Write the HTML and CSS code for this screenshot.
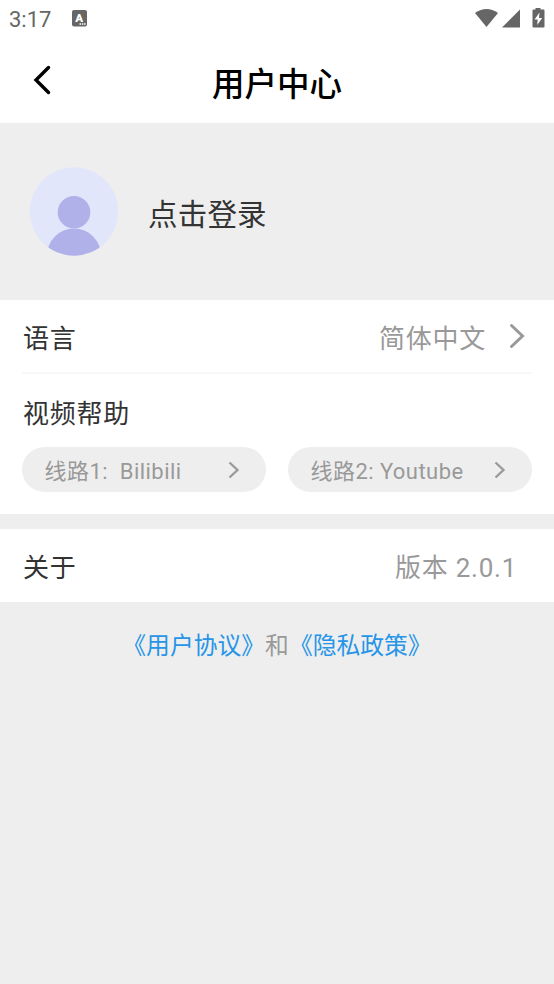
FILE: index.html
```html
<!DOCTYPE html>
<html lang="zh-CN">
<head>
<meta charset="UTF-8">
<title>用户中心</title>
<link rel="stylesheet" href="styles.css">
</head>
<body>
<div class="status">
  <span class="time">3:17</span>
  <svg class="input-icon" width="15" height="17" viewBox="0 0 15 17"><rect width="15" height="16.5" rx="2" fill="#666"/><text class="input-letter" x="7.200" y="12" text-anchor="middle">A</text><path d="M7.500 14H14" stroke="#fff" stroke-width="1.4" stroke-dasharray="1.5 .8"/></svg>
  <svg class="signals" width="72" height="22" viewBox="0 0 72 22"><g fill="#666"><path d="M1 5Q12.500-3 24 5L12.500 19Z"/><path d="M46 1.500V19.500H28Z"/><path d="M61.500 0h5v1.500h3q1 0 1 1v16q0 1-1 1H59.500q-1 0-1-1v-16q0-1 1-1h2z"/></g><path d="M65.500 4.500 60.500 11.500h3.200l-.5 5.500 5-7h-3.200z" fill="#fff"/></svg>
</div>
<header class="header">
  <svg class="back" width="18" height="30" viewBox="0 0 18 30"><path d="M15.500 2.500 3 15 15.500 27.500" fill="none" stroke="#000" stroke-width="3.400" stroke-linecap="round"/></svg>
  <h1>用户中心</h1>
</header>
<section class="profile">
  <svg width="88" height="89" viewBox="0 0 88 89"><defs><clipPath id="disc"><circle cx="44" cy="44.500" r="44.200"/></clipPath></defs><g clip-path="url(#disc)"><rect width="88" height="89" fill="#e2e6fa"/><circle cx="44" cy="45.300" r="16.300" fill="#b0b1e9"/><circle cx="44" cy="88.500" r="27" fill="#b0b1e9"/></g></svg>
  <span class="login">点击登录</span>
</section>
<main>
  <section class="card settings">
    <div class="row language">
      <span>语言</span>
      <span class="value">简体中文</span>
      <svg class="chevron" width="16" height="26" viewBox="0 0 16 26"><path d="M2.500 2.500 13.500 13 2.500 23.500" fill="none" stroke="#999" stroke-width="3" stroke-linecap="round"/></svg>
    </div>
    <div class="help-title">视频帮助</div>
    <div class="routes">
      <div class="pill"><span>线路1:&nbsp; Bilibili</span><svg width="12" height="18" viewBox="0 0 12 18"><path d="M1.500 1.500 9.500 9 1.500 16.500" fill="none" stroke="#999" stroke-width="2.300"/></svg></div>
      <div class="pill"><span>线路2: Youtube</span><svg width="12" height="18" viewBox="0 0 12 18"><path d="M1.500 1.500 9.500 9 1.500 16.500" fill="none" stroke="#999" stroke-width="2.300"/></svg></div>
    </div>
  </section>
  <section class="card row about"><span>关于</span><span class="value">版本 2.0.1</span></section>
</main>
<footer><span class="link">《用户协议》</span><span>和</span><span class="link">《隐私政策》</span></footer>
</body>
</html>
```
FILE: styles.css
```css
* { box-sizing: border-box; }
body {
  margin: 0;
  min-height: 984px;
  background: #eee;
  color: #333;
  font-family: Roboto, "Noto Sans CJK SC", sans-serif;
  overflow: hidden;
}
svg { display: block; flex: none; }
.status {
  display: flex;
  height: 38px;
  padding: 0 8px 0 9px;
  align-items: center;
  background: #fff;
  color: #666;
}
.time { width: 63px; padding-top: 2px; font-size: 22px; line-height: 38px; }
.input-icon { margin-bottom: 1px; }
.input-letter { fill: #fff; font-size: 11.5px; font-weight: 900; }
.signals { margin-left: auto; }
.header {
  display: grid;
  grid-template-columns: 80px 1fr 80px;
  height: 85px;
  align-items: center;
  background: #fff;
}
.back { margin: 0 0 2px 33px; }
h1 {
  margin: 8px 0 0;
  color: #000;
  font-size: 32.5px;
  line-height: 48px;
  font-weight: 500;
  text-align: center;
}
.profile {
  display: flex;
  height: 177px;
  align-items: center;
  gap: 30px;
  padding: 0 30px;
}
.login { padding-top: 6px; font-size: 29.5px; line-height: 44px; letter-spacing: .2px; }
.card { background: #fff; font-size: 26px; letter-spacing: .75px; }
.settings { height: 214px; padding: 0 22px; }
.row { display: flex; align-items: center; }
.language { height: 74px; padding-left: 1px; border-bottom: 2px solid #f7f7f7; }
.value { margin-left: auto; color: #999; }
.chevron { margin: 0 7px 0 23px; }
.help-title { height: 73px; padding-left: 1px; line-height: 80px; }
.routes { display: grid; grid-template-columns: 1fr 1fr; gap: 22px; }
.pill {
  display: flex;
  height: 45px;
  align-items: center;
  justify-content: space-between;
  padding: 0 26px 0 22.5px;
  border-radius: 23px;
  background: #eee;
  color: #999;
  font-size: 22px;
  letter-spacing: .45px;
}
.pill span { padding-bottom: 2px; }
.about { height: 73px; margin-top: 15px; padding: 0 37px 0 23px; }
footer {
  display: flex;
  justify-content: center;
  padding-top: 26px;
  color: #999;
  font-size: 23.8px;
  line-height: 36px;
}
.link { color: #2695e8; }
```
